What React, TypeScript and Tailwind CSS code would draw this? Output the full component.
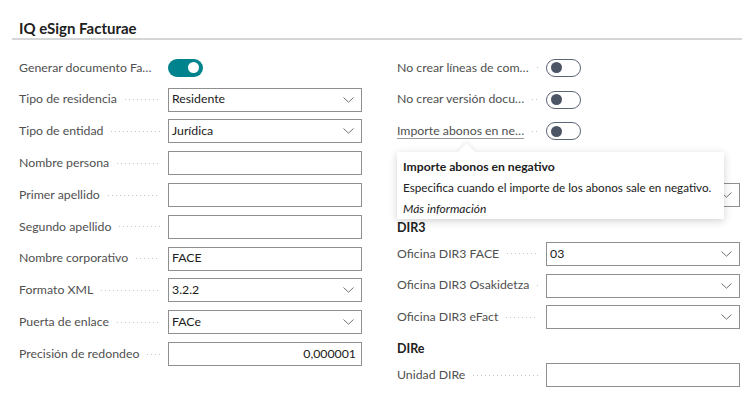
import type { ReactNode } from "react";

const FONT = "font-['Lato',sans-serif]";

function Chevron() {
  return (
    <svg width="11" height="6" viewBox="0 0 11 6" className="shrink-0" fill="none">
      <path d="M0.5 0.5 L5.5 5.2 L10.5 0.5" stroke="#707070" strokeWidth="1" />
    </svg>
  );
}

function Field({
  label,
  underline,
  children,
}: {
  label?: string;
  underline?: boolean;
  children: ReactNode;
}) {
  return (
    <div className="flex h-[31.8px] items-center">
      <div className="flex w-[149px] shrink-0 items-center pr-2">
        {label ? (
          <span
            className={`whitespace-nowrap text-[12.3px] text-[#505050] ${
              underline ? "underline decoration-[#9a9a9a] underline-offset-[3px]" : ""
            }`}
          >
            {label}
          </span>
        ) : null}
        {label ? (
          <span className="ml-2 h-px flex-1 bg-[linear-gradient(to_right,#c6c6c6_1px,transparent_1px)] bg-[length:4px_1px] bg-repeat-x" />
        ) : null}
      </div>
      <div className="w-[194px] shrink-0">{children}</div>
    </div>
  );
}

function TextBox({ value, right }: { value?: string; right?: boolean }) {
  return (
    <div
      className={`flex h-6 items-center border border-[#8f8f8f] px-[3px] text-[12.3px] text-[#212121] ${
        right ? "justify-end pr-[5px]" : ""
      }`}
    >
      {value}
    </div>
  );
}

function Select({ value }: { value?: string }) {
  return (
    <div className="flex h-6 items-center justify-between border border-[#8f8f8f] pl-[3px] pr-[7px] text-[12.3px] text-[#212121]">
      <span>{value}</span>
      <Chevron />
    </div>
  );
}

function Toggle({ on }: { on?: boolean }) {
  if (on) {
    return (
      <div className="flex h-[18px] w-[35px] items-center justify-end rounded-full bg-[#00838c] pr-[4px]">
        <div className="h-[11px] w-[11px] rounded-full bg-white" />
      </div>
    );
  }
  return (
    <div className="flex h-[18px] w-[35px] items-center rounded-full border border-[#5c6573] pl-[4px]">
      <div className="h-[11px] w-[11px] rounded-full bg-[#4b5565]" />
    </div>
  );
}

function Heading({ h, children }: { h: string; children: ReactNode }) {
  return (
    <div className={`flex items-center text-[12.5px] font-bold text-[#212121] ${h}`}>
      {children}
    </div>
  );
}

export default function App() {
  return (
    <div className={`${FONT} h-[399px] w-[754px] overflow-hidden bg-white px-3`}>
      <div className="border-b-2 border-[#d4d6d8] pl-[7px] pt-[18px]">
        <h1 className="text-[15px] font-bold leading-[20px] text-[#212121]">
          IQ eSign Facturae
        </h1>
      </div>

      <div className="flex gap-[35px] pl-[7px] pt-[12px]">
        <div>
          <Field label="Generar documento Fa…">
            <Toggle on />
          </Field>
          <Field label="Tipo de residencia">
            <Select value="Residente" />
          </Field>
          <Field label="Tipo de entidad">
            <Select value="Jurídica" />
          </Field>
          <Field label="Nombre persona">
            <TextBox />
          </Field>
          <Field label="Primer apellido">
            <TextBox />
          </Field>
          <Field label="Segundo apellido">
            <TextBox />
          </Field>
          <Field label="Nombre corporativo">
            <TextBox value="FACE" />
          </Field>
          <Field label="Formato XML">
            <Select value="3.2.2" />
          </Field>
          <Field label="Puerta de enlace">
            <Select value="FACe" />
          </Field>
          <Field label="Precisión de redondeo">
            <TextBox value="0,000001" right />
          </Field>
        </div>

        <div className="relative">
          <Field label="No crear líneas de com…">
            <Toggle />
          </Field>
          <Field label="No crear versión docu…">
            <Toggle />
          </Field>
          <Field label="Importe abonos en ne…" underline>
            <Toggle />
          </Field>
          {/* rows hidden behind the tooltip */}
          <Field>
            <Toggle />
          </Field>
          <Field>
            <Select />
          </Field>
          <Heading h="h-[27px] pt-[7px]">DIR3</Heading>
          <Field label="Oficina DIR3 FACE">
            <Select value="03" />
          </Field>
          <Field label="Oficina DIR3 Osakidetza">
            <Select />
          </Field>
          <Field label="Oficina DIR3 eFact">
            <Select />
          </Field>
          <Heading h="h-[26px] pt-[5px]">DIRe</Heading>
          <Field label="Unidad DIRe">
            <TextBox />
          </Field>

          <div className="absolute left-0 top-[100px] w-[327px] bg-white px-[6px] pt-[4px] shadow-[0_2px_8px_rgba(0,0,0,0.18)]">
            <div className="absolute -top-[6px] left-[63px] h-[13px] w-[13px] rotate-45 bg-white shadow-[-2px_-2px_4px_rgba(0,0,0,0.06)]" />
            <div className="relative">
              <div className="text-[12.2px] font-bold leading-[21px] text-[#212121]">
                Importe abonos en negativo
              </div>
              <div className="whitespace-nowrap text-[11.7px] leading-[21px] text-[#212121]">
                Especifica cuando el importe de los abonos sale en negativo.
              </div>
              <div className="text-[12px] italic leading-[21px] text-[#212121]">
                Más información
              </div>
            </div>
          </div>
        </div>
      </div>
    </div>
  );
}
